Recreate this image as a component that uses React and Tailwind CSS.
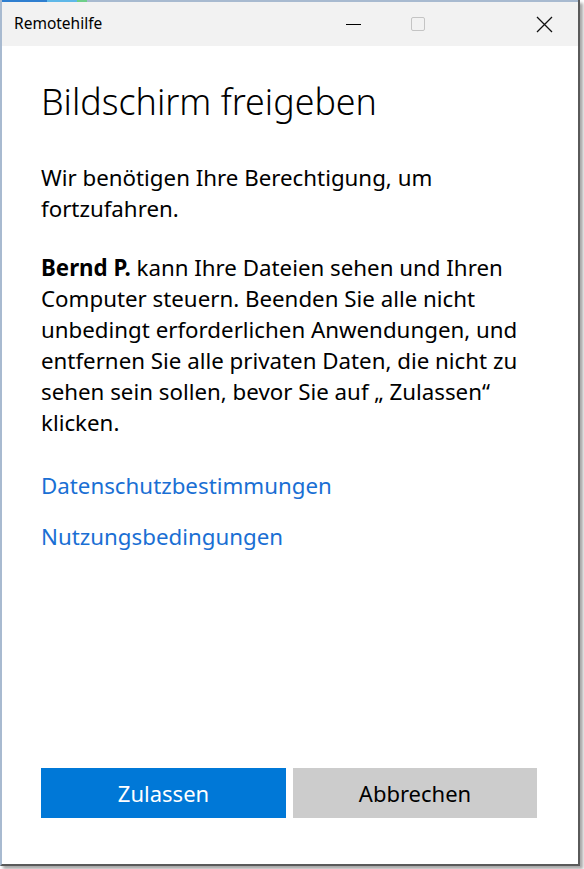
export default function App() {
  const font = { fontFamily: '"Noto Sans", "Open Sans", sans-serif' };
  return (
    <div className="w-[584px] h-[869px] bg-white relative overflow-hidden" style={font}>
      <div className="w-[580px] h-[866px] flex flex-col border-l-2 border-[#a8bad0] border-r-2 border-r-[#5a5a5a] border-b-2 border-b-[#5a5a5a] shadow-[3px_3px_3px_rgba(0,0,0,0.35)] bg-white">
        <div className="h-[2px] flex">
          <div className="w-[45px] bg-[#2f7fd0]"></div>
          <div className="w-[30px] bg-[#5fb8e8]"></div>
          <div className="w-[10px] bg-[#6fcf8a]"></div>
          <div className="flex-1 bg-[#a8bad0]"></div>
        </div>
        <div className="h-[44px] bg-[#f2f2f2] flex items-center">
          <div className="pl-[12px] text-[15.5px] text-black flex-1">Remotehilfe</div>
          <div className="w-[46px] h-full flex items-center justify-center mr-[19px]">
            <div className="w-[15px] h-[1px] bg-black"></div>
          </div>
          <div className="w-[46px] h-full flex items-center justify-center mr-[80px]">
            <div className="w-[14px] h-[14px] border border-[#c4c4c4] rounded-[2px]"></div>
          </div>
          <div className="w-[46px] h-full flex items-center justify-center mr-[11px]">
            <svg width="17" height="17" viewBox="0 0 17 17">
              <path d="M1 1L16 16M16 1L1 16" stroke="#111" strokeWidth="1.3" />
            </svg>
          </div>
        </div>
        <div className="flex-1 flex flex-col pl-[39px] pr-[40px] text-black">
          <h1 className="text-[35.8px] font-light leading-[44px] mt-[33px]">Bildschirm freigeben</h1>
          <p className="text-[22.3px] leading-[31px] mt-[39px]">Wir benötigen Ihre Berechtigung, um fortzufahren.</p>
          <p className="text-[22.3px] leading-[31px] mt-[28px]">
            <span className="font-bold">Bernd P.</span> kann Ihre Dateien sehen und Ihren Computer steuern. Beenden Sie alle nicht unbedingt erforderlichen Anwendungen, und entfernen Sie alle privaten Daten, die nicht zu sehen sein sollen, bevor Sie auf „ Zulassen“ klicken.
          </p>
          <div className="text-[22.3px] leading-[31px] mt-[32px] text-[#1a6fd4]">Datenschutzbestimmungen</div>
          <div className="text-[22.3px] leading-[31px] mt-[20px] text-[#1a6fd4]">Nutzungsbedingungen</div>
          <div className="mt-auto mb-[46px] flex gap-[7px]">
            <div className="w-[245px] h-[50px] bg-[#0078d7] text-white text-[22px] flex items-center justify-center">Zulassen</div>
            <div className="w-[244px] h-[50px] bg-[#cccccc] text-black text-[22px] flex items-center justify-center">Abbrechen</div>
          </div>
        </div>
      </div>
    </div>
  );
}
